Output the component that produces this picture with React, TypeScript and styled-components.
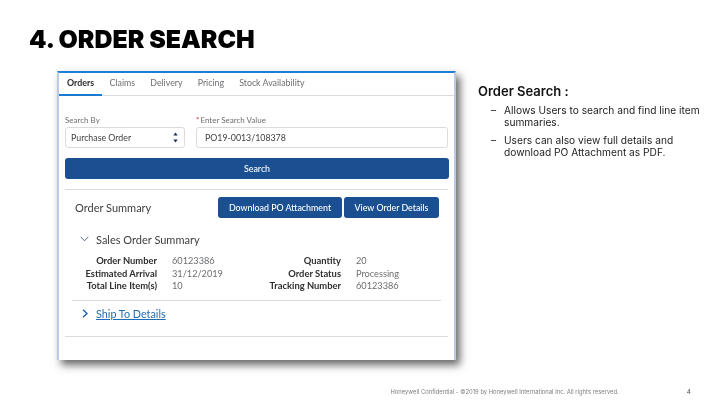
import { Fragment } from "react";
import styled, { createGlobalStyle } from "styled-components";

const GlobalStyle = createGlobalStyle`
  html, body {
    margin: 0;
    padding: 0;
    background: #fff;
  }
  * {
    box-sizing: border-box;
  }
`;

const Slide = styled.div`
  width: 720px;
  height: 405px;
  overflow: hidden;
  display: flex;
  flex-direction: column;
  background: #fff;
  font-family: Lato, sans-serif;
  filter: blur(0.3px);
`;
const Title = styled.h1`
  margin: 0;
  padding: 25px 0 0 29px;
  height: 71px;
  font-family: Inter, sans-serif;
  font-size: 24.9px;
  line-height: 29px;
  font-weight: 900;
  color: #000;
`;
const Content = styled.div`
  display: flex;
  padding-left: 57px;
  height: 289px;
`;
const Panel = styled.div`
  width: 399px;
  height: 289px;
  background: #fff;
  border: 2px solid #b9cbe6;
  border-top: 2px solid #1e7fd8;
  border-bottom: none;
  box-shadow: 4px 5px 8px rgba(40, 40, 40, 0.7);
  display: flex;
  flex-direction: column;
  color: #3e3e3c;
`;
const Tabs = styled.div`
  display: flex;
  height: 23px;
  border-bottom: 1px solid #dddbda;
  flex-shrink: 0;
`;
const Tab = styled.div<{ $active?: boolean }>`
  height: 23px;
  padding: 0 ${(p) => (p.$active ? "8px" : "7.6px")};
  font-size: 8.8px;
  line-height: 20px;
  font-weight: ${(p) => (p.$active ? 700 : 400)};
  color: ${(p) => (p.$active ? "#2b2b2b" : "#6b6d70")};
  border-bottom: ${(p) => (p.$active ? "2px solid #1b7bd0" : "none")};
  width: ${(p) => (p.$active ? "43px" : "auto")};
`;
const Form = styled.div`
  display: flex;
  gap: 11px;
  padding: 18px 6px 0;
`;
const Field = styled.div<{ $grow?: boolean }>`
  display: flex;
  flex-direction: column;
  width: ${(p) => (p.$grow ? "252px" : "120px")};
`;
const Label = styled.label`
  font-size: 8px;
  line-height: 12px;
  height: 13px;
  color: #6b6d70;
  b {
    color: #c23934;
    font-weight: 400;
    margin-right: 1px;
  }
`;
const Input = styled.div<{ $pad: number }>`
  height: 21px;
  border: 1px solid #dddbda;
  border-radius: 3px;
  padding-left: ${(p) => p.$pad}px;
  padding-right: 6px;
  display: flex;
  align-items: center;
  justify-content: space-between;
  font-size: 8.8px;
  color: #3e3e3c;
`;
const Primary = styled.button<{ $width?: number }>`
  display: block;
  border: none;
  padding: 0;
  background: #1a5091;
  border-radius: 3px;
  color: #fff;
  font-family: inherit;
  font-size: 8.85px;
  font-weight: 500;
  height: 21px;
  width: ${(p) => (p.$width ? `${p.$width}px` : "auto")};
`;
const SearchRow = styled.div`
  padding: 10px 5px 0 6px;
  display: flex;
  ${Primary} {
    flex: 1;
  }
`;
const Divider = styled.div<{ $inset: number; $top: number }>`
  height: 1px;
  background: #dddbda;
  margin: ${(p) => p.$top}px ${(p) => p.$inset}px 0;
  flex-shrink: 0;
`;
const SummaryHead = styled.div`
  display: flex;
  align-items: center;
  gap: 2px;
  padding: 7px 15px 0 16px;
`;
const SummaryTitle = styled.div`
  flex: 1;
  font-size: 11px;
  color: #3e3e3c;
`;
const SectionHead = styled.div`
  display: flex;
  align-items: center;
  gap: 7px;
  padding: 12px 0 0 21px;
  height: 30px;
  font-size: 11px;
  color: #3e3e3c;
`;
const Details = styled.div`
  display: grid;
  grid-template-columns: 84px 102px 82px auto;
  grid-auto-rows: 12.5px;
  margin-top: 7px;
  padding-left: 14px;
  font-size: 9.2px;
  line-height: 12.5px;
`;
const Key = styled.div`
  text-align: right;
  color: #2f2f2f;
  font-size: 9.4px;
  font-weight: 700;
  white-space: nowrap;
`;
const Val = styled.div`
  padding-left: 15px;
  color: #6b6d70;
  white-space: nowrap;
`;
const ShipRow = styled.div`
  display: flex;
  align-items: center;
  gap: 8px;
  padding-left: 23px;
  height: 26px;
  font-size: 10.8px;
  a {
    color: #1f6bb3;
    text-decoration: underline;
  }
`;
const Aside = styled.div`
  padding: 12px 0 0 22px;
  width: 264px;
  font-family: Inter, sans-serif;
`;
const AsideTitle = styled.div`
  font-size: 13px;
  line-height: 16px;
  font-weight: 600;
  color: #111;
  margin-bottom: 5px;
`;
const Bullets = styled.ul`
  list-style: none;
  margin: 0;
  padding: 0 0 0 13px;
`;
const Bullet = styled.li`
  display: flex;
  gap: 6px;
  font-size: 10.2px;
  line-height: 12px;
  margin-bottom: 6px;
  color: #222;
  span:first-child {
    width: 7px;
    flex-shrink: 0;
  }
`;
const Footer = styled.div`
  flex: 1;
  display: flex;
  justify-content: flex-end;
  padding: 28px 29px 0 0;
  font-family: Inter, sans-serif;
  font-size: 5.85px;
  line-height: 8px;
  color: #808080;
`;
const PageNo = styled.span`
  margin-left: 68px;
  font-size: 6.5px;
  color: #555;
`;

function Sorter() {
  return (
    <svg width="5" height="11" viewBox="0 0 5 11">
      <path d="M2.5 0.5L4.7 3.6H0.3Z" fill="#16325c" />
      <path d="M2.5 10.5L4.7 7.4H0.3Z" fill="#16325c" />
    </svg>
  );
}

function Chevron({ open }: { open?: boolean }) {
  return open ? (
    <svg width="9" height="6" viewBox="0 0 9 6" fill="none">
      <path d="M0.7 0.8L4.5 4.8L8.3 0.8" stroke="#54698d" strokeWidth="1" />
    </svg>
  ) : (
    <svg width="6" height="9" viewBox="0 0 6 9" fill="none">
      <path d="M1 0.7L5 4.5L1 8.3" stroke="#1a5fa8" strokeWidth="1.4" />
    </svg>
  );
}

const rows = [
  ["Order Number", "60123386", "Quantity", "20"],
  ["Estimated Arrival", "31/12/2019", "Order Status", "Processing"],
  ["Total Line Item(s)", "10", "Tracking Number", "60123386"],
];

export default function App() {
  return (
    <Slide>
      <GlobalStyle />
      <Title>4. ORDER SEARCH</Title>
      <Content>
        <Panel>
          <Tabs>
            <Tab $active>Orders</Tab>
            <Tab>Claims</Tab>
            <Tab>Delivery</Tab>
            <Tab>Pricing</Tab>
            <Tab>Stock Availability</Tab>
          </Tabs>
          <Form>
            <Field>
              <Label>Search By</Label>
              <Input $pad={5}>
                Purchase Order
                <Sorter />
              </Input>
            </Field>
            <Field $grow>
              <Label>
                <b>*</b>Enter Search Value
              </Label>
              <Input $pad={8}>PO19-0013/108378</Input>
            </Field>
          </Form>
          <SearchRow>
            <Primary>Search</Primary>
          </SearchRow>
          <Divider $inset={6} $top={10} />
          <SummaryHead>
            <SummaryTitle>Order Summary</SummaryTitle>
            <Primary $width={124}>Download PO Attachment</Primary>
            <Primary $width={95}>View Order Details</Primary>
          </SummaryHead>
          <SectionHead>
            <Chevron open />
            Sales Order Summary
          </SectionHead>
          <Details>
            {rows.map((r) => (
              <Fragment key={r[0]}>
                <Key>{r[0]}</Key>
                <Val>{r[1]}</Val>
                <Key>{r[2]}</Key>
                <Val>{r[3]}</Val>
              </Fragment>
            ))}
          </Details>
          <Divider $inset={13} $top={7} />
          <ShipRow>
            <Chevron />
            <a>Ship To Details</a>
          </ShipRow>
          <Divider $inset={6} $top={9} />
        </Panel>
        <Aside>
          <AsideTitle>Order Search :</AsideTitle>
          <Bullets>
            <Bullet>
              <span>–</span>
              <span>
                Allows Users to search and find line item
                <br />
                summaries.
              </span>
            </Bullet>
            <Bullet>
              <span>–</span>
              <span>
                Users can also view full details and
                <br />
                download PO Attachment as PDF.
              </span>
            </Bullet>
          </Bullets>
        </Aside>
      </Content>
      <Footer>
        Honeywell Confidential - ©2019 by Honeywell International Inc. All rights reserved.
        <PageNo>4</PageNo>
      </Footer>
    </Slide>
  );
}
